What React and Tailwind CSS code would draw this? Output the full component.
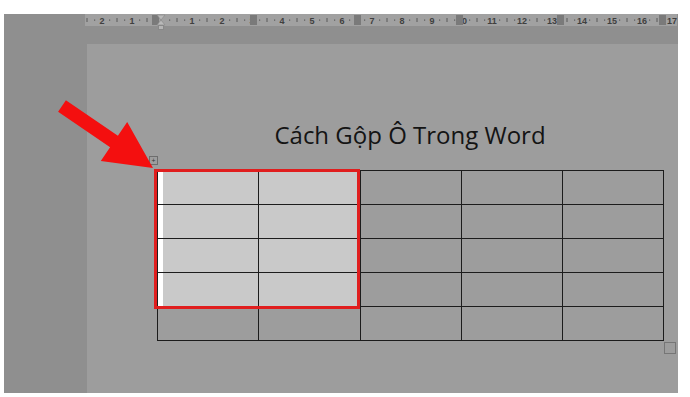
import React from 'react'

const cols = [101, 102, 101, 101, 101]
const rows = [34, 34, 34, 34, 34]

// ruler marks, x in ruler coords (ruler starts at page x=85)
const ORIGIN = 77
const STEP = 30
const marks = []
for (let q = -10; q <= 68; q++) {
  const n = q / 4
  const x = ORIGIN + n * STEP
  if (x < 1 || x > 591) continue
  if (q % 4 === 0) {
    if (n !== 0) marks.push({ type: 'num', x, label: String(Math.abs(n)) })
  } else if (q % 2 === 0) {
    marks.push({ type: 'tick', x })
  } else {
    marks.push({ type: 'dot', x })
  }
}
const colMarkers = [168, 272, 374, 475, 577]

function Ruler() {
  return (
    <svg width="592" height="12" className="block">
      <rect x="0" y="0" width="592" height="12" fill="#a1a1a1" />
      {marks.map((m, i) =>
        m.type === 'num' ? (
          <text key={i} x={m.x} y="9.5" fontSize="9" textAnchor="middle" fill="#3f3f3f"
            fontFamily="Liberation Sans, sans-serif" fontWeight="bold">{m.label}</text>
        ) : m.type === 'tick' ? (
          <rect key={i} x={m.x - 0.5} y="4" width="1" height="4" fill="#5a5a5a" />
        ) : (
          <rect key={i} x={m.x - 0.5} y="5.5" width="1.2" height="1.2" fill="#5a5a5a" />
        )
      )}
      <rect x="67" y="1" width="7" height="10" fill="#7a7a7a" />
      {colMarkers.map((x) => (
        <rect key={x} x={x - 3} y="1" width="7" height="10" fill="#7a7a7a" />
      ))}
      <path d="M72 1 L80 1 L76 6 Z M72 11 L80 11 L76 6 Z" fill="#b9b9b9" stroke="#8a8a8a" strokeWidth="0.7" />
    </svg>
  )
}

function Arrow() {
  return (
    <svg width="690" height="397" className="absolute left-0 top-0 pointer-events-none">
      <polygon
        points="65.9,100.2 117.9,135.7 127.2,122.1 153,168 100.8,160.9 110.1,147.3 58.1,111.8"
        fill="#f40f0f"
      />
    </svg>
  )
}

export default function App() {
  return (
    <div className="relative w-[690px] h-[397px] bg-white pt-[14px] pl-[4px] pr-[12px] pb-[4px] font-['Open_Sans',sans-serif]">
      <div className="h-full bg-[#8f8f8f] flex flex-col">
        {/* ruler */}
        <div className="flex h-[12px]">
          <div className="w-[81px]" />
          <div className="relative">
            <Ruler />
            <div className="absolute left-[73px] top-[11px] w-[6px] h-[5px] bg-[#b4b4b4] border border-[#888]" />
          </div>
        </div>
        <div className="h-[18px]" />

        {/* body */}
        <div className="flex flex-1">
          <div className="w-[83px]" />
          <div className="flex-1 bg-[#9d9d9d] pl-[70px] pt-[76px]">
            <div className="w-[506px] text-center text-[24px] leading-[32px] text-[#141414] font-['Open_Sans',sans-serif] -mt-[1px]">
              Cách Gộp Ô Trong Word
            </div>

            <div className="relative mt-[19px] w-[507px]">
              <div className="border-l border-t border-[#1c1c1c] w-fit">
                {rows.map((h, r) => (
                  <div key={r} className="flex">
                    {cols.map((w, c) => {
                      const sel = r < 4 && c < 2
                      return (
                        <div
                          key={c}
                          style={{ width: w, height: h }}
                          className={
                            sel
                              ? 'border-r border-b border-[#1c1c1c] bg-[#c9c9c9] flex'
                              : 'border-r border-b border-[#1c1c1c]'
                          }
                        >
                          {sel && c === 0 && <div className="w-[5px] h-full bg-white" />}
                        </div>
                      )
                    })}
                  </div>
                ))}
              </div>

              {/* selection outline */}
              <div className="absolute -left-[3px] -top-[1px] w-[206px] h-[140px] border-[3px] border-[#e01e1e] pointer-events-none" />

              {/* move handle */}
              <div className="absolute -left-[8px] -top-[14px] w-[9px] h-[9px] border border-[#6d6d6d] flex items-center justify-center text-[7px] leading-none text-[#333]">
                +
              </div>

              {/* resize handle */}
              <div className="absolute left-[507px] top-[172px] w-[12px] h-[12px] border border-[#767676]" />
            </div>
          </div>
        </div>
      </div>
      <Arrow />
    </div>
  )
}
